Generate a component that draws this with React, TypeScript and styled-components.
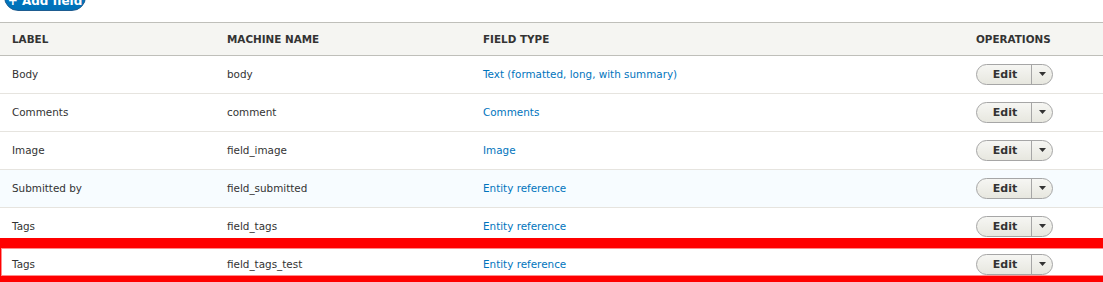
import React from 'react';
import styled, { createGlobalStyle } from 'styled-components';

const GlobalStyle = createGlobalStyle`
	html, body {
		margin: 0;
		padding: 0;
		background: #fff;
	}
	body {
		font-family: "DejaVu Sans", "Liberation Sans", sans-serif;
		color: #333;
		overflow: hidden;
	}
`

interface Field {
	label: string;
	machine: string;
	type: string;
	hover?: boolean;
	marked?: boolean;
}

const fields: Field[] = [
	{ label: 'Body', machine: 'body', type: 'Text (formatted, long, with summary)' },
	{ label: 'Comments', machine: 'comment', type: 'Comments' },
	{ label: 'Image', machine: 'field_image', type: 'Image' },
	{ label: 'Submitted by', machine: 'field_submitted', type: 'Entity reference', hover: true },
	{ label: 'Tags', machine: 'field_tags', type: 'Entity reference' },
	{ label: 'Tags', machine: 'field_tags_test', type: 'Entity reference', marked: true },
]

export default function App(): JSX.Element {
	return (
		<Page>
			<GlobalStyle />
			<ActionBar>
				<AddButton href='#'>+ Add field</AddButton>
			</ActionBar>
			<Table>
				<colgroup>
					<Col $w={215} />
					<Col $w={256} />
					<Col />
					<Col $w={139} />
				</colgroup>
				<thead>
					<tr>
						<Th>Label</Th>
						<Th>Machine name</Th>
						<Th>Field type</Th>
						<Th>Operations</Th>
					</tr>
				</thead>
				<tbody>
					{fields.map((f, i) => (
						<Row key={i} $hover={f.hover}>
							<Td>
								{f.marked && <Marker />}
								{f.label}
							</Td>
							<Td>{f.machine}</Td>
							<Td><TypeLink href='#'>{f.type}</TypeLink></Td>
							<Td>
								<Dropbutton>
									<EditPart>Edit</EditPart>
									<Toggle>
										<svg width='7' height='4' viewBox='0 0 7 4'>
											<path d='M0 0 L7 0 L3.5 4 Z' fill='#333' />
										</svg>
									</Toggle>
								</Dropbutton>
							</Td>
						</Row>
					))}
				</tbody>
			</Table>
		</Page>
	)
}

const Page = styled.div`
	width: 1103px;
	height: 282px;
	overflow: hidden;
`

const ActionBar = styled.div`
	height: 22px;
	display: flex;
	align-items: flex-end;
	padding-left: 4px;
	overflow: hidden;
`

const AddButton = styled.a`
	display: flex;
	align-items: flex-end;
	justify-content: center;
	flex-shrink: 0;
	box-sizing: border-box;
	width: 82px;
	height: 28px;
	margin-bottom: 11px;
	padding-bottom: 2px;
	border-radius: 20px;
	background: linear-gradient(to bottom, #007bc6, #0071b8);
	border: 1px solid #1e5c90;
	color: #fff;
	font-weight: bold;
	font-size: 12px;
	line-height: 14px;
	white-space: nowrap;
	text-decoration: none;
`

const Table = styled.table`
	width: 100%;
	table-layout: fixed;
	border-collapse: collapse;
	font-size: 10.4px;
	border-top: 1px solid #bfbfba;
`

const Col = styled.col<{ $w?: number }>`
	width: ${p => (p.$w ? `${p.$w}px` : 'auto')};
`

const Th = styled.th`
	height: 33px;
	box-sizing: border-box;
	padding: 0 12px;
	text-align: left;
	font-weight: bold;
	text-transform: uppercase;
	font-size: 10.4px;
	color: #333;
	background: #f5f5f2;
	border-bottom: 1px solid #bfbfba;
	white-space: nowrap;
`

const Row = styled.tr<{ $hover?: boolean }>`
	height: 38px;
	background: ${p => (p.$hover ? '#f7fcff' : '#fff')};
	border-bottom: 1px solid #e6e4df;
`

const Td = styled.td`
	position: relative;
	padding: 0 12px 1px;
	color: #333;
	white-space: nowrap;
`

const Marker = styled.span`
	position: absolute;
	top: -8px;
	left: -9px;
	width: 1140px;
	height: 48px;
	box-sizing: border-box;
	border: 10px solid #ff0000;
	box-shadow: inset 0 0 0 1px #ff8c8c;
	pointer-events: none;
	z-index: 2;
`

const TypeLink = styled.a`
	color: #0074bd;
	text-decoration: none;
`

const Dropbutton = styled.div`
	display: inline-flex;
	align-items: stretch;
	height: 21px;
	width: 77px;
	box-sizing: border-box;
	border: 1px solid #a6a6a6;
	border-radius: 20px;
	background: linear-gradient(to bottom, #f6f6f3, #e7e7df);
	overflow: hidden;
	vertical-align: middle;
`

const EditPart = styled.span`
	flex: 1;
	display: flex;
	align-items: center;
	justify-content: center;
	font-weight: bold;
	font-size: 11px;
	color: #333;
	border-right: 1px solid #a6a6a6;
	padding-left: 2px;
`

const Toggle = styled.span`
	width: 20px;
	display: flex;
	align-items: center;
	justify-content: center;
`
